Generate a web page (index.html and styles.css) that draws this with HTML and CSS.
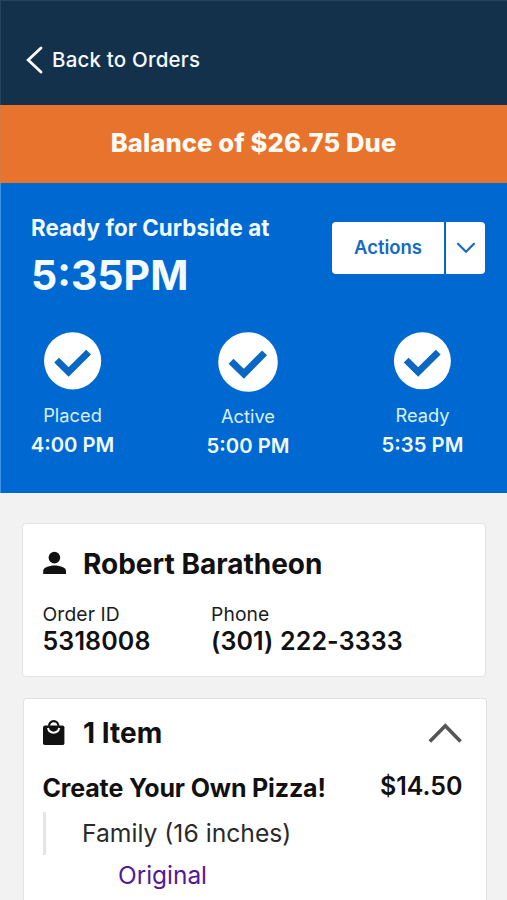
FILE: index.html
```html
<!DOCTYPE html>
<html lang="en">
<head>
<meta charset="utf-8">
<title>Order details</title>
<link rel="stylesheet" href="styles.css">
</head>
<body>
<header class="topbar">
  <svg class="back-icon" width="18" height="28" viewBox="0 0 18 28"><path d="M16 2 L3.2 14 L16 26"/></svg>
  <span class="back-label">Back to Orders</span>
</header>
<div class="balance"><span>Balance of $26.75 Due</span></div>
<section class="status">
  <div class="status-head">
    <div>
      <div class="ready-label"><span>Ready for Curbside at</span></div>
      <div class="ready-time"><span>5:35PM</span></div>
    </div>
    <div class="actions">
      <div class="actions-main"><span>Actions</span></div>
      <div class="actions-toggle"><svg width="20" height="14" viewBox="0 0 20 14"><path d="M2 2.8 L10 10.8 L18 2.8"/></svg></div>
    </div>
  </div>
  <div class="steps">
    <div class="step">
      <svg class="check" width="58" height="58" viewBox="0 0 58 58"><circle cx="28.6" cy="28.8" r="28.6"/><path d="M12.6 28.2 L24.6 40 L44.6 20.2"/></svg>
      <div class="step-name"><span>Placed</span></div>
      <div class="step-time"><span>4:00 PM</span></div>
    </div>
    <div class="step step-mid">
      <svg class="check" width="60" height="60" viewBox="0 0 58 58"><circle cx="29" cy="29" r="28.8"/><path d="M12.6 28.2 L25 40.4 L45 20.2"/></svg>
      <div class="step-name"><span>Active</span></div>
      <div class="step-time"><span>5:00 PM</span></div>
    </div>
    <div class="step">
      <svg class="check" width="58" height="58" viewBox="0 0 58 58"><circle cx="28.4" cy="28.8" r="28.5"/><path d="M12.2 28.2 L24.2 40 L44.2 20.2"/></svg>
      <div class="step-name"><span>Ready</span></div>
      <div class="step-time"><span>5:35 PM</span></div>
    </div>
  </div>
</section>
<main>
  <section class="card customer">
    <div class="card-head">
      <svg width="24" height="24" viewBox="0 0 24 24"><circle cx="11.4" cy="5.6" r="5.8"/><path d="M.2 22 V18.8 C.2 14.8 7.6 13.4 11.6 13.4 S23 14.8 23 18.8 V22 Z"/></svg>
      <h2 class="name">Robert Baratheon</h2>
    </div>
    <div class="fields">
      <div><div class="field-name"><span>Order ID</span></div><div class="field-value"><span>5318008</span></div></div>
      <div><div class="field-name"><span>Phone</span></div><div class="field-value phone"><span>(301) 222-3333</span></div></div>
    </div>
  </section>
  <section class="card items">
    <div class="card-head">
      <svg width="24" height="26" viewBox="0 0 24 26"><path d="M2.2 5.4 H19.4 Q21.4 5.4 21.4 7.2 V23.4 Q21.4 25 19.4 25 H1.8 Q0 25 0 23.2 V7.4 Q0 5.4 2.2 5.4 Z"/><path class="bag-handle" d="M6 5.8 A4.7 4.7 0 0 1 15.4 5.8"/><path class="bag-inner" d="M5 8 A5.7 5.7 0 0 0 16.2 8"/></svg>
      <h2 class="count">1 Item</h2>
      <svg class="collapse" width="36" height="24" viewBox="0 0 36 24"><path d="M2.8 20.6 L18.3 4.8 L33.6 20.6"/></svg>
    </div>
    <div class="item-row">
      <div class="item-name"><span>Create Your Own Pizza!</span></div>
      <div class="item-price"><span>$14.50</span></div>
    </div>
    <div class="option"><span>Family (16 inches)</span></div>
    <div class="suboption"><span>Original</span></div>
  </section>
</main>
</body>
</html>
```
FILE: styles.css
```css
* { box-sizing: border-box; }
html, body { margin: 0; height: 900px; overflow: hidden; }
body { font-family: Inter, "Liberation Sans", sans-serif; background: #f2f2f2; color: #111; white-space: nowrap; }
svg { display: block; flex: none; overflow: visible; }
h2 { margin: 0; }

.topbar { height: 105px; padding: 13px 0 0 25px; background: #14314c; color: #f4faff; display: flex; align-items: center; gap: 9px; border-top: 1px solid #24455f; box-shadow: inset 1px 0 #24455f; }
.back-icon path { fill: none; stroke: #fff; stroke-width: 2.8; stroke-linecap: round; }
.back-label { font-size: 20.5px; font-weight: 500; letter-spacing: .2px; }

.balance { height: 78px; padding-top: 1px; background: #e7732c; color: #fffaf2; display: flex; justify-content: center; line-height: 73px; font-size: 25.6px; font-weight: 800; letter-spacing: .1px; box-shadow: inset 1px 0 #d8783f; }

.status { height: 310px; padding: 32px 22px 0 31px; background: #0069d1; color: #f2fbff; box-shadow: inset 1px 0 #3a93ea; }
.status-head { display: flex; justify-content: space-between; height: 117px; }
.ready-label { font-size: 22.3px; line-height: 25px; font-weight: 650; letter-spacing: .1px; }
.ready-time { font-size: 41px; line-height: 50px; margin-top: 10px; font-weight: 700; }
.actions { display: flex; gap: 2px; height: 52px; margin-top: 7px; color: #1769c4; font-weight: 600; font-size: 18.5px; line-height: 51px; }
.actions-main { width: 112px; background: #fff; border-radius: 4px 0 0 4px; text-align: center; }
.actions-toggle { width: 39px; background: #fff; border-radius: 0 4px 4px 0; display: flex; align-items: center; justify-content: center; }
.actions-toggle path { fill: none; stroke: #1769c4; stroke-width: 2.2; stroke-linecap: round; }
.steps { display: flex; justify-content: space-between; padding-right: 21px; }
.step { width: 83px; display: flex; flex-direction: column; align-items: center; }
.step-mid { margin-left: 1px; }
.check circle { fill: #fff; }
.check path { fill: none; stroke: #0a68c4; stroke-width: 6.8; stroke-linejoin: miter; }
.step-name { font-size: 18.3px; line-height: 24px; margin-top: 13px; color: #d8efff; }
.step-time { font-size: 20.3px; line-height: 26px; margin-top: 5px; font-weight: 600; }
.step-mid .step-name { margin-top: 12px; }

main { padding: 30px 20px 0 21.5px; }
.card { background: #fff; border: 1px solid #e2e2e2; border-radius: 4px; padding: 0 20px; }
.customer { height: 154px; width: 464px; padding-top: 24px; }
.card-head { display: flex; align-items: center; height: 32px; }
.card-head > svg { fill: #111; }
.card-head h2 { margin-left: 16.5px; font-size: 28px; line-height: 32px; }
.fields { display: flex; margin-top: 22px; }
.fields > div { width: 168.5px; }
.field-name { font-size: 19.3px; line-height: 25px; color: #1c1c1c; letter-spacing: .1px; }
.field-value { font-size: 25px; line-height: 28px; font-weight: 600; letter-spacing: .13px; }
.items { width: 464px; height: 202px; margin: 21px 0 0 1px; padding: 18px 23px 0 19px; border-bottom: 0; border-radius: 4px 4px 0 0; }
.card-head .bag-handle { fill: none; stroke: #111; stroke-width: 2.2; }
.card-head .bag-inner { fill: none; stroke: #fff; stroke-width: 2; }
.card-head .collapse { margin-left: auto; fill: none; stroke: #555; stroke-width: 3.6; stroke-linecap: butt; }
.item-row { display: flex; justify-content: space-between; margin-top: 22px; line-height: 30px; font-size: 25px; }
.item-name { font-weight: 700; padding-top: 2px; letter-spacing: -.15px; }
.item-price { font-weight: 600; }
.option { height: 43px; margin-top: 9px; border-left: 3px solid #e0e6ea; padding-left: 36.5px; font-size: 24.7px; line-height: 43px; color: #2a2a2a; }
.suboption { margin-left: 75.5px; font-size: 24.4px; line-height: 40px; color: #53189a; }
```
